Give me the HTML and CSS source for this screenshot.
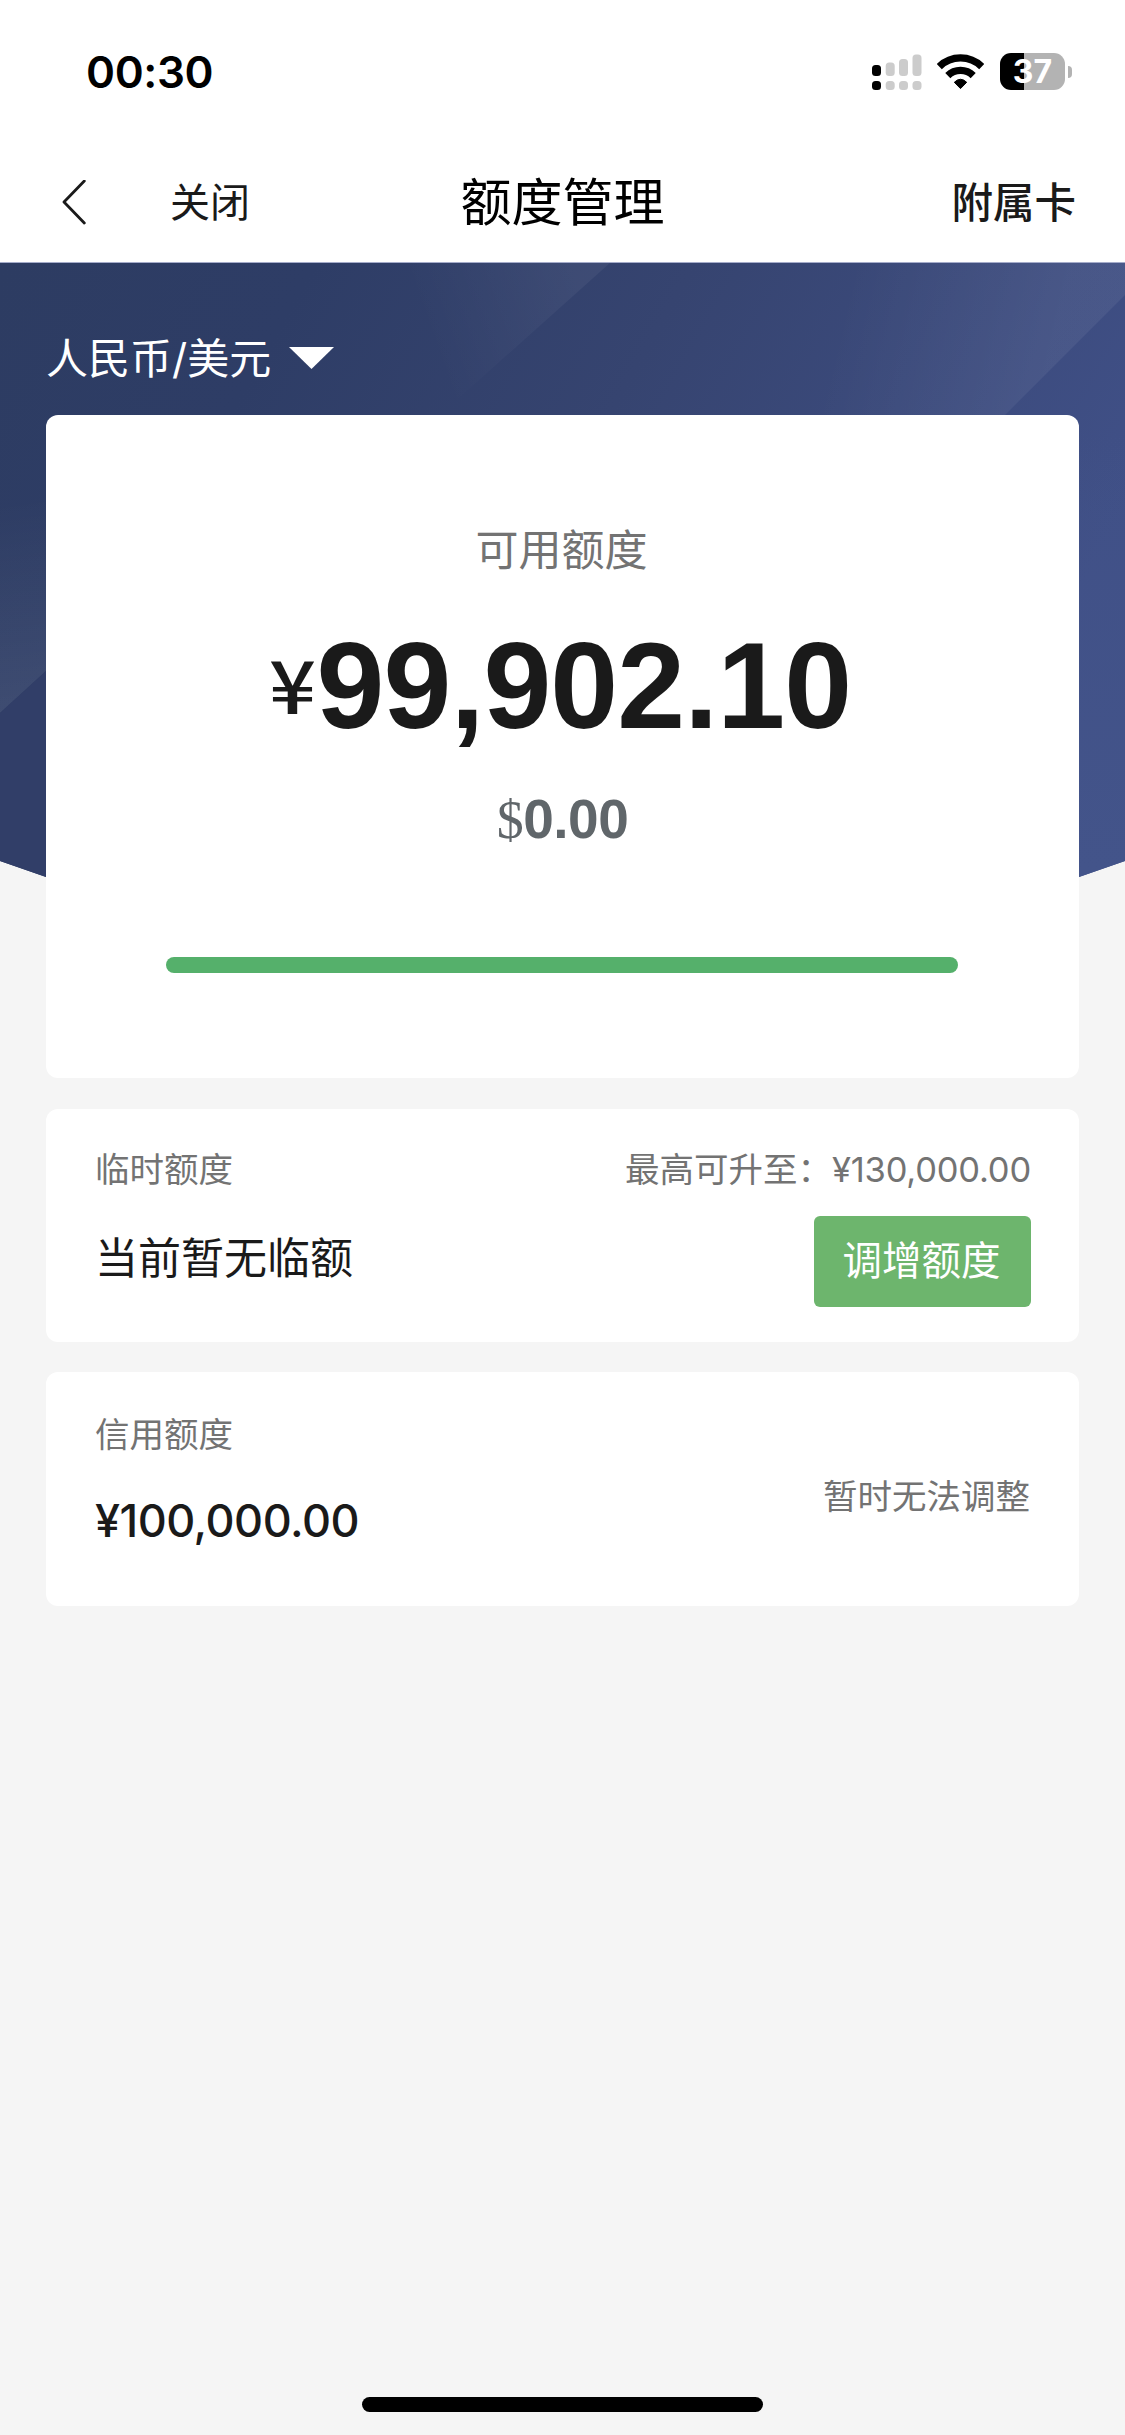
FILE: index.html
```html
<!DOCTYPE html>
<html lang="zh-CN">
<head>
<meta charset="utf-8">
<title>额度管理</title>
<link rel="stylesheet" href="styles.css">
</head>
<body>
<header class="top">
  <div class="status">
    <span class="clock">00:30</span>
    <div class="status-icons">
      <svg class="signal" width="50" height="36" viewBox="0 0 50 36">
        <g fill="#000"><rect x="0" y="11" width="9" height="11" rx="3.5"/><rect x="0" y="27" width="9" height="9" rx="3.5"/></g>
        <g fill="#ccc"><rect x="13.7" y="8.5" width="9" height="13.5" rx="3.5"/><rect x="13.7" y="27" width="9" height="9" rx="3.5"/><rect x="27" y="5" width="9" height="17" rx="3.5"/><rect x="27" y="27" width="9" height="9" rx="3.5"/><rect x="40.5" y="0.5" width="9" height="21.5" rx="3.5"/><rect x="40.5" y="27" width="9" height="9" rx="3.5"/></g>
      </svg>
      <svg class="wifi" width="47" height="35" viewBox="0 0 47 35">
        <g fill="none" stroke="#000" stroke-width="7.2"><path d="M2.3 12.6A30.2 30.2 0 0 1 44.7 12.6"/><path d="M10.8 21.6A18 18 0 0 1 36.2 21.6"/></g>
        <path d="M23.5 34.6L17.3 28.3Q23.5 22.2 29.7 28.3Z" fill="#000" stroke="#000" stroke-width="1" stroke-linejoin="round"/>
      </svg>
      <div class="battery"><span class="battery-body">37</span><span class="battery-cap"></span></div>
    </div>
  </div>
  <nav class="nav">
    <div class="nav-left">
      <svg width="24" height="46" viewBox="0 0 24 46"><path d="M22.3 1L2 22L22.3 43" fill="none" stroke="#1a1a1a" stroke-width="2.8" stroke-linecap="round" stroke-linejoin="round"/></svg>
      <span class="close">关闭</span>
    </div>
    <h1 class="title">额度管理</h1>
    <span class="extra">附属卡</span>
  </nav>
</header>
<main class="content">
  <svg class="backdrop" width="1125" height="640" viewBox="0 0 1125 640">
    <defs>
      <linearGradient id="base" x1="0" y1="0" x2="1" y2=".35"><stop offset="0" stop-color="#2d3c62"/><stop offset=".25" stop-color="#2e3d66"/><stop offset=".55" stop-color="#364470"/><stop offset="1" stop-color="#405087"/></linearGradient>
      <linearGradient id="b1" gradientUnits="userSpaceOnUse" x1="400" y1="0" x2="555" y2="-55"><stop offset="0" stop-color="#fff" stop-opacity="0"/><stop offset="1" stop-color="#fff" stop-opacity=".05"/></linearGradient>
      <linearGradient id="b2" gradientUnits="userSpaceOnUse" x1="850" y1="0" x2="1060" y2="50"><stop offset="0" stop-color="#fff" stop-opacity="0"/><stop offset="1" stop-color="#fff" stop-opacity=".06"/></linearGradient>
      <linearGradient id="b3" gradientUnits="userSpaceOnUse" x1="0" y1="240" x2="30" y2="445"><stop offset="0" stop-color="#fff" stop-opacity="0"/><stop offset="1" stop-color="#fff" stop-opacity=".08"/></linearGradient>
      <linearGradient id="b4" gradientUnits="userSpaceOnUse" x1="0" y1="170" x2="0" y2="610"><stop offset="0" stop-color="#43548a" stop-opacity="0"/><stop offset="1" stop-color="#43548a"/></linearGradient>
    </defs>
    <path d="M0 0H1125V599L1079 615L562 700L46 615L0 599Z" fill="url(#base)"/>
    <path d="M390 0H611L440 153H300Z" fill="url(#b1)"/>
    <path d="M850 0H1125V33L1005 153H780Z" fill="url(#b2)"/>
    <path d="M0 200H46V409L0 451Z" fill="url(#b3)"/>
    <path d="M1079 170H1125V599L1079 615Z" fill="url(#b4)"/>
    <path d="M0 451L46 409V615L0 599Z" fill="#313e68"/>
    <path d="M0 .5H1125" stroke="#a5acca"/>
  </svg>
  <div class="currency">人民币/美元<svg width="45" height="22" viewBox="0 0 45 22"><path d="M0 0H45L22.5 22Z" fill="#fff"/></svg></div>
  <section class="card summary">
    <div class="label">可用额度</div>
    <div class="amount"><span class="yen">¥</span><span>99,902.10</span></div>
    <div class="usd"><span class="dollar">$</span>0.00</div>
    <div class="meter"></div>
  </section>
  <section class="card temp">
    <div class="row"><span class="hint">临时额度</span><span class="hint">最高可升至：<span class="number">¥130,000.00</span></span></div>
    <div class="row temp-row"><span class="none">当前暂无临额</span><button class="raise">调增额度</button></div>
  </section>
  <section class="card credit">
    <div><div class="hint">信用额度</div><div class="limit">¥100,000.00</div></div>
    <span class="hint">暂时无法调整</span>
  </section>
</main>
<footer class="home"><span></span></footer>
</body>
</html>
```
FILE: styles.css
```css
* { box-sizing: border-box; }
body {
  margin: 0;
  width: 1125px;
  height: 2435px;
  display: flex;
  flex-direction: column;
  background: #f5f5f5;
  color: #1a1a1a;
  font-family: Inter, "Noto Sans CJK SC", sans-serif;
}
.top { height: 262px; background: #fff; flex: none; }
.status {
  height: 143px;
  padding: 0 53px 0 86px;
  display: flex;
  justify-content: space-between;
  align-items: center;
}
.clock { font-size: 44px; font-weight: 600; color: #000; line-height: 60px; letter-spacing: -.4px; }
.status-icons { display: flex; align-items: center; }
.wifi { margin: 0 16px 0 15px; }
.battery { display: flex; align-items: center; gap: 3px; }
.battery-body {
  width: 65px;
  height: 37px;
  border-radius: 11px;
  background: linear-gradient(90deg, #000 24px, #b3b3b3 24px);
  color: #fff;
  font-size: 32px;
  font-weight: 700;
  line-height: 37px;
  text-align: center;
}
.battery-cap { width: 4px; height: 12px; border-radius: 0 6px 6px 0; background: #b3b3b3; }
.nav {
  height: 119px;
  padding: 0 49px 0 62px;
  display: grid;
  grid-template-columns: 1fr auto 1fr;
  align-items: center;
  line-height: 60px;
}
.nav-left { display: flex; align-items: center; gap: 84px; }
.close { font-size: 40px; font-weight: 400; }
.title { margin: 0 0 0 -13px; font-size: 51px; font-weight: 400; color: #000; }
.extra { font-size: 41.5px; font-weight: 500; text-align: right; }
.content { position: relative; padding: 0 46px; display: flex; flex-direction: column; flex: 1; }
.backdrop { position: absolute; left: 0; top: 0; }
.currency {
  position: relative;
  height: 153px;
  padding: 66px 0 0;
  display: flex;
  align-items: flex-start;
  gap: 18px;
  color: #fff;
  font-size: 42px;
  line-height: 62px;
}
.currency svg { margin-top: 19px; }
.card { position: relative; background: #fff; border-radius: 12px; }
.summary {
  height: 663px;
  padding-top: 105px;
  display: flex;
  flex-direction: column;
  align-items: center;
}
.label { margin-left: -2px; font-size: 43px; line-height: 60px; color: #737373; }
.amount {
  margin: 36px 2px 0 0;
  font: 700 122px/140px "Liberation Sans", sans-serif;
  letter-spacing: -.9px;
  display: flex;
  align-items: flex-start;
}
.yen {
  margin-top: 16px;
  font: 500 73px/100px "Noto Sans CJK SC", sans-serif;
  letter-spacing: 3px;
  transform: scaleX(1.13);
}
.usd {
  margin-top: 31px;
  font: 700 55px/64px "Liberation Sans", sans-serif;
  letter-spacing: -.5px;
  color: #60666a;
  display: flex;
  align-items: baseline;
}
.dollar { font: 400 54px/64px "Liberation Serif", serif; }
.meter { width: 792px; height: 16px; margin: 105px 1px 0 0; border-radius: 8px; background: #55b06b; }
.hint { font-size: 34.5px; line-height: 50px; color: #737373; }
.number { letter-spacing: -.2px; }
.row { display: flex; justify-content: space-between; }
.temp { height: 233px; margin-top: 31px; padding: 36px 48px 0 49px; }
.temp-row { margin-top: 21px; }
.none { font-size: 43px; line-height: 84px; }
.raise {
  width: 217px;
  height: 91px;
  padding: 0 2px 1px 0;
  border: 0;
  border-radius: 6px;
  background: #6db56d;
  color: #fff;
  font: 400 39.5px/60px Inter, "Noto Sans CJK SC", sans-serif;
}
.credit {
  height: 234px;
  margin-top: 30px;
  padding: 38px 49px 0 49px;
  display: flex;
  justify-content: space-between;
}
.credit > .hint { margin-top: 62px; }
.limit { margin-top: 31px; font-size: 45px; font-weight: 500; line-height: 60px; letter-spacing: -.5px; }
.home { height: 38px; display: flex; justify-content: center; }
.home span { width: 401px; height: 15px; border-radius: 8px; background: #000; }
```
